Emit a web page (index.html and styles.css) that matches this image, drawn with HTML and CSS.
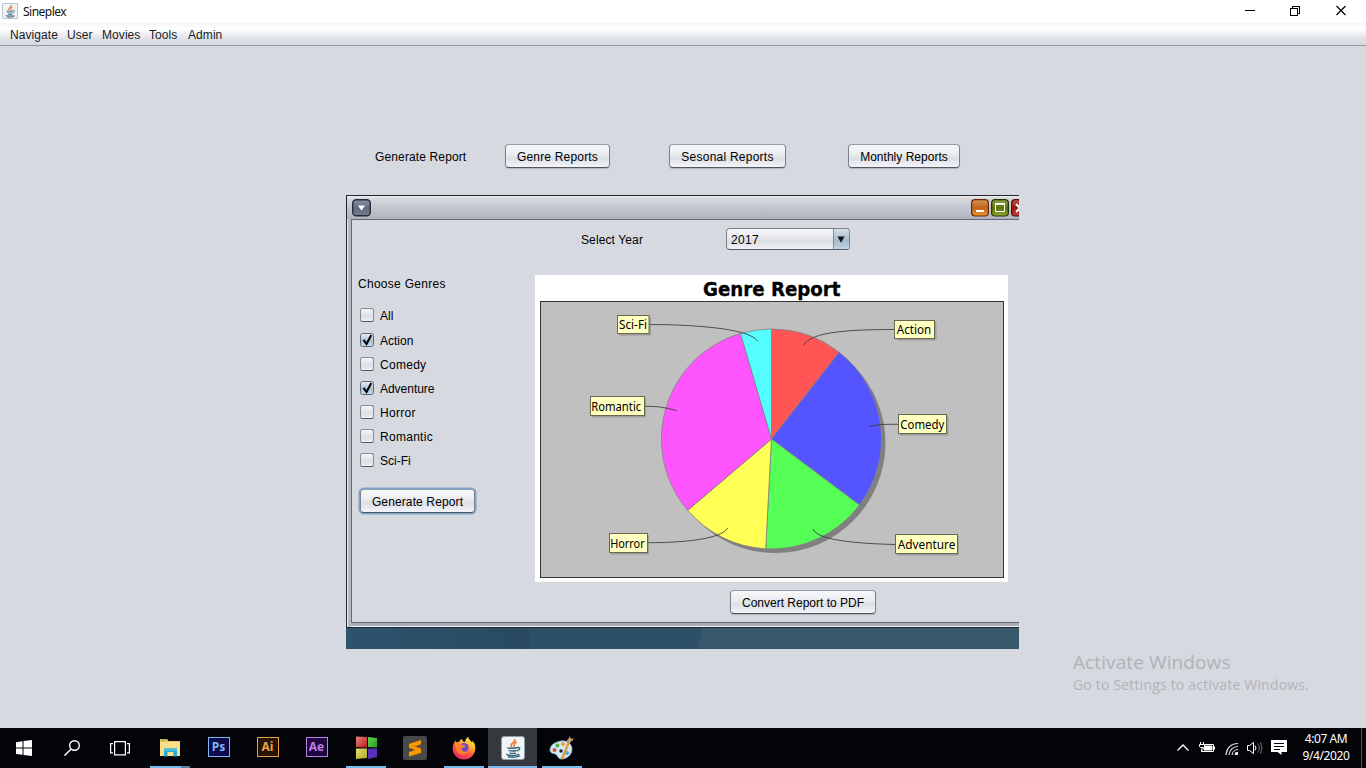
FILE: index.html
```html
<!DOCTYPE html>
<html lang="en">
<head>
<meta charset="utf-8">
<title>Sineplex</title>
<link rel="stylesheet" href="styles.css">
</head>
<body>
<header class="titlebar">
  <svg class="app-icon" width="16" height="16" viewBox="0 0 24 24"><use href="#java"/></svg>
  <span class="app-title">Sineplex</span>
  <svg class="win-controls" width="104" height="16" viewBox="0 0 104 16" fill="none" stroke="#000" shape-rendering="crispEdges">
    <path d="M0 7.500h10M45.500 5.500h7v7h-7zM47.500 5V3.500h7v7H53"/>
    <path d="M91.500 3l9 9M100.500 3l-9 9" shape-rendering="auto" stroke-width="1.200"/>
  </svg>
</header>
<nav class="menubar">
  <span class="m1">Navigate</span><span class="m2">User</span><span class="m3">Movies</span><span class="m4">Tools</span><span class="m5">Admin</span>
</nav>
<main class="workspace">
  <div class="report-row">
    <span class="report-label">Generate Report</span>
    <button class="btn genre">Genre Reports</button>
    <button class="btn seasonal">Sesonal Reports</button>
    <button class="btn monthly">Monthly Reports</button>
  </div>
  <div class="desktop">
    <section class="iframe">
      <div class="iframe-bar">
        <svg width="19" height="18" viewBox="0 0 19 18"><defs><linearGradient id="gm" x2="0" y2="1"><stop stop-color="#8a93a4"/><stop offset=".5" stop-color="#606b7e"/><stop offset="1" stop-color="#727d90"/></linearGradient></defs><rect x=".7" y=".7" width="17.600" height="16" rx="3.500" fill="url(#gm)" stroke="#252c38" stroke-width="1.400"/><path d="M5.800 6.500h7.400l-3.700 5z" fill="#fff"/></svg>
        <svg class="iframe-controls" width="60" height="18" viewBox="0 0 60 18"><defs>
          <linearGradient id="go" x2="0" y2="1"><stop stop-color="#d69555"/><stop offset=".5" stop-color="#bf6318"/><stop offset="1" stop-color="#ed9430"/></linearGradient>
          <linearGradient id="gg" x2="0" y2="1"><stop stop-color="#8d9e48"/><stop offset=".5" stop-color="#5b7108"/><stop offset="1" stop-color="#91a82c"/></linearGradient>
          <linearGradient id="gr" x2="0" y2="1"><stop stop-color="#bb5550"/><stop offset=".5" stop-color="#9b1713"/><stop offset="1" stop-color="#ce3d32"/></linearGradient></defs>
          <rect x=".6" y=".6" width="16.800" height="16.400" rx="3.500" fill="url(#go)" stroke="#682a08" stroke-width="1.200"/><path d="M5 11h8v2H5z" fill="#fff"/>
          <rect x="20.600" y=".6" width="16.800" height="16.400" rx="3.500" fill="url(#gg)" stroke="#263506" stroke-width="1.200"/><path d="M24.500 5v7.500h9V5z" fill="none" stroke="#fff"/><path d="M24 4.800h10" stroke="#fff" stroke-width="1.600"/>
          <rect x="40.600" y=".6" width="16.800" height="16.400" rx="3.500" fill="url(#gr)" stroke="#590d0d" stroke-width="1.200"/><path d="M45 5l8 8M53 5l-8 8" stroke="#fff" stroke-width="2"/>
        </svg>
      </div>
      <div class="iframe-body">
        <div class="year-row">
          <span class="year-label">Select Year</span>
          <div class="combo"><span class="combo-value">2017</span><span class="combo-arrow"><svg width="8" height="7" viewBox="0 0 8 7"><path d="M.5.5h7L4 6.700z" fill="#10151c"/></svg></span></div>
        </div>
        <div class="columns">
          <aside class="filters">
            <h2>Choose Genres</h2>
            <label class="check all"><i class="box"></i>All</label>
            <label class="check"><i class="box on"><svg width="15" height="15" viewBox="0 0 15 15"><path d="M3.500 6.800l3 4.200L11.300 2" fill="none" stroke="#000" stroke-width="2"/></svg></i>Action</label>
            <label class="check wide"><i class="box"></i>Comedy</label>
            <label class="check tight"><i class="box on"><svg width="15" height="15" viewBox="0 0 15 15"><path d="M3.500 6.800l3 4.200L11.300 2" fill="none" stroke="#000" stroke-width="2"/></svg></i>Adventure</label>
            <label class="check wide"><i class="box"></i>Horror</label>
            <label class="check wide"><i class="box"></i>Romantic</label>
            <label class="check"><i class="box"></i>Sci-Fi</label>
            <button class="btn generate">Generate Report</button>
          </aside>
          <div class="report">
            <svg class="chart" width="473" height="307" viewBox="535 275 473 307">
              <rect x="535" y="275" width="473" height="307" fill="#fff"/>
              <text class="chart-title" x="703" y="296" textLength="137.500" lengthAdjust="spacingAndGlyphs">Genre Report</text>
              <rect x="540.500" y="301.500" width="463" height="276" fill="#c0c0c0" stroke="#333"/>
              <circle cx="775.500" cy="443" r="110" fill="#808080"/>
              <g stroke="#808080" stroke-width=".8" stroke-linejoin="round">
                <path fill="#f55" d="M771.500 439V329A110 110 0 0 1 839.200 352.300z"/>
                <path fill="#55f" d="M771.500 439L839.200 352.300A110 110 0 0 1 859.500 505z"/>
                <path fill="#5f5" d="M771.500 439L859.500 505A110 110 0 0 1 765.700 548.800z"/>
                <path fill="#ff5" d="M771.500 439L765.700 548.800A110 110 0 0 1 687.700 510.300z"/>
                <path fill="#f5f" d="M771.500 439L687.700 510.300A110 110 0 0 1 740.500 333.500z"/>
                <path fill="#5ff" d="M771.500 439L740.500 333.500A110 110 0 0 1 771.500 329z"/>
              </g>
              <g fill="none" stroke="#404040" stroke-width=".9">
                <path d="M649 324.500C690 324.500 749 328 757.500 341"/>
                <path d="M645 406.300C658 406.300 663 407 677 410.700"/>
                <path d="M648 542.700C690 542.700 722 538 727.700 528"/>
                <path d="M895 329.500C855 329.500 810 331 803.500 345.500"/>
                <path d="M898 424.300C887 424.300 878 424 869.500 426.500"/>
                <path d="M895 544.500C855 543.500 817 540 813 529"/>
              </g>
              <g fill="#808080" opacity=".55">
                <path d="M619 317h32v18.500h-32zM592 398h54v19.500H592zM611 535h38v19.500h-38zM897 322h39.500v18.500H897zM900 416h48.500v19.500H900zM897 536h62v19.500H897z"/>
              </g>
              <g fill="#ffffc0" stroke="#68684e">
                <rect x="617.500" y="315.500" width="31.500" height="18"/>
                <rect x="590.500" y="396.500" width="54" height="19"/>
                <rect x="609.500" y="533.500" width="38" height="19"/>
                <rect x="894.500" y="320.500" width="40" height="18"/>
                <rect x="898.500" y="414.500" width="48" height="19"/>
                <rect x="895.500" y="534.500" width="62" height="19"/>
              </g>
              <g class="slice-labels">
                <text x="619" y="329" textLength="28" lengthAdjust="spacingAndGlyphs">Sci-Fi</text>
                <text x="591.200" y="411" textLength="50" lengthAdjust="spacingAndGlyphs">Romantic</text>
                <text x="610.200" y="548" textLength="34.500" lengthAdjust="spacingAndGlyphs">Horror</text>
                <text x="896.800" y="334" textLength="34.500" lengthAdjust="spacingAndGlyphs">Action</text>
                <text x="900.300" y="429" textLength="44" lengthAdjust="spacingAndGlyphs">Comedy</text>
                <text x="897.800" y="549" textLength="57.500" lengthAdjust="spacingAndGlyphs">Adventure</text>
              </g>
            </svg>
            <button class="btn convert">Convert Report to PDF</button>
          </div>
        </div>
      </div>
    </section>
    <svg class="wallpaper" width="673" height="21" viewBox="0 0 673 21"><defs><linearGradient id="wp"><stop stop-color="#2d536d"/><stop offset=".28" stop-color="#294a60"/></linearGradient></defs><path fill="url(#wp)" d="M0 0h673v21H0z"/><path fill="#2e5067" d="M184 0h175v21H184z"/><path fill="#36576c" d="M357 0h316v21H351z"/></svg>
  </div>
  <div class="watermark"><span class="wm-title">Activate Windows</span><span class="wm-text">Go to Settings to activate Windows.</span></div>
</main>
<footer class="taskbar">
  <div class="sys"><svg width="16" height="16" viewBox="0 0 16 16" fill="#fff"><path d="M0 2.200l6.500-1v6.300H0zM7.500 1L16 0v7.500H7.500zM0 8.500h6.500v6.300L0 13.900zM7.500 8.500H16V16l-8.500-1z"/></svg></div>
  <div class="sys"><svg width="16" height="16" viewBox="0 0 16 16" fill="none" stroke="#fff" stroke-width="1.400"><circle cx="10.500" cy="5.500" r="4.800"/><path d="M7.200 9L.5 15.600"/></svg></div>
  <div class="sys view"><svg width="20" height="15" viewBox="0 0 20 15" fill="none" stroke="#fff" stroke-width="1.200"><path d="M4.600.6h10.800v13.300H4.600zM3 2.600H.6v9.300H3M17 2.600h2.400v9.300H17"/></svg></div>
  <div class="app run multi"><svg width="22" height="20" viewBox="0 0 22 20"><path d="M1 1h7l1.500 2H21v15H1z" fill="#eac35c"/><path d="M1 4h20v14H1z" fill="#fbdf86"/><path d="M2 1.500h5v1H2z" fill="#61b3a0"/><path d="M5 18.500v-8h13v8h-3.500V14h-6v4.500z" fill="#25a9d5"/><path d="M5 10.500h13V13H5z" fill="#43bee2"/></svg></div>
  <div class="app"><span class="adobe ps">Ps</span></div>
  <div class="app"><span class="adobe ai">Ai</span></div>
  <div class="app"><span class="adobe ae">Ae</span></div>
  <div class="app run"><svg width="24" height="24" viewBox="0 0 24 24"><defs><linearGradient id="cr" y2="1"><stop stop-color="#ed817b"/><stop offset="1" stop-color="#b51e18"/></linearGradient><linearGradient id="cg" y2="1"><stop stop-color="#69d558"/><stop offset="1" stop-color="#249c18"/></linearGradient><linearGradient id="cy" y2="1"><stop stop-color="#dfdd6b"/><stop offset="1" stop-color="#b3a92c"/></linearGradient><linearGradient id="cp" y2="1"><stop stop-color="#5630bd"/><stop offset="1" stop-color="#5b2dbb"/></linearGradient></defs><path fill="url(#cr)" d="M2 .5l11 .5v10.500L2 11z"/><path fill="url(#cg)" d="M14 1l9 1v9.500L14 11z"/><path fill="url(#cy)" d="M2 12.500h11V22L2 23z"/><path fill="url(#cp)" d="M14 12.500h9V21l-9 2z"/></svg></div>
  <div class="app"><svg width="24" height="24" viewBox="0 0 24 24"><rect width="24" height="24" rx="2" fill="#494949"/><path d="M6 8l12-4v4.300l-6.500 2.200 6.500 2.200V17L6 20.500V16l6-2-6-2.200z" fill="#ff9800"/><path d="M6 8l12 4v.7L11.500 10.500z" fill="#da7900"/></svg></div>
  <div class="app run"><svg width="24" height="24" viewBox="0 0 24 24"><defs><linearGradient id="ff" x1=".8" x2=".3" y2="1"><stop stop-color="#fff04a"/><stop offset=".35" stop-color="#ffb62c"/><stop offset=".65" stop-color="#fc5444"/><stop offset="1" stop-color="#ed2469"/></linearGradient></defs><path fill="url(#ff)" d="M3.500 4.500C4 7 5 6 7 6c1-2 2-3 3-3 0 2 1.500 3 3 3 0-2 2-4 3-5.500.5 3 3 4 4 6 .5-.5.500-1 .3-2C23 7 23.500 10 23.300 12.500 23 19 18 23.500 12 23.500S1 19 .7 13C.5 9 2 7 3.500 4.500z"/><circle cx="12" cy="11.500" r="4.600" fill="#7148c9"/><path fill="#ff812e" d="M3 8c3-2 6-1 7 1 2 .1 3.500 0 3.500 1-1 2-3 1-4 3 1 3 4 4 7 2-2 5-10 5-12-1z"/></svg></div>
  <div class="app run active"><svg width="24" height="24" viewBox="0 0 24 24"><g id="java"><rect x=".5" y=".5" width="23" height="23" rx="2.500" fill="#f1f4f5" stroke="#8a9eab"/><g fill="none" stroke="#ed7934" stroke-width="1.700"><path d="M13.300 3c3 3-5.500 4.300-2.500 7.800M15.600 6c-4 2-1.500 3-2.800 5"/></g><g fill="none" stroke="#376482" stroke-width="1.400"><path d="M7 11.500c-1.500 1 8 1 10-.1 3 0 1.500 3-1 3.500M8 14c0 1.500 6 1 7.500.5M9 16.500c0 1.300 4.500 1 6 .3M6 18c-2 1.500 10 2.300 12 0M7 20.800c4 .8 10 .5 12-1.300"/></g></g></svg></div>
  <div class="app run"><svg width="26" height="24" viewBox="0 0 26 24"><path d="M12 5c6-1 11 3 11 8 0 6-5 10-11 10-3 0-3-3-5-4.500C5 17 1 18 1 14 1 9 6 6 12 5z" fill="#d2eaf4" stroke="#7fa7b9" stroke-width=".8"/><circle cx="5.500" cy="14" r="2" fill="#d45342"/><circle cx="12" cy="15" r="1.700" fill="#172736"/><circle cx="8.500" cy="9.500" r="2" fill="#50b641"/><circle cx="14" cy="8" r="2" fill="#ef9b2c"/><circle cx="18" cy="17" r="2" fill="#52a5dc"/><path d="M13 23l7-17" stroke="#e69839" stroke-width="2.400"/><path d="M18.500 6c-2-3 2-2 2-6l2 3 2-1c0 3-3 3-4 6z" fill="#c39a70"/></svg></div>
  <div class="tray">
    <svg class="tray-icons" width="112" height="20" viewBox="0 0 112 20" fill="none" stroke="#fff">
      <path d="M2.500 12.500L8 7l5.500 5.500" stroke-width="1.300"/>
      <path d="M30 6.500h8.500v7h-12v-2M39.500 8.500v3"/><path d="M30 8h7v4h-8v-2z" fill="#fff"/><path d="M25.500 4v2M28.500 4v2M24.500 6.500h5v2l-1 1h-3l-1-1zM27 9.500v3.500"/>
      <g stroke="#ddd" stroke-width="1.200"><path d="M51 17C51.500 10 56 5.500 63 5.500M54 17c.5-5 4-8.500 9-8.500M57 17c.5-3 3-5.500 6-5.500M60 17c.2-1.500 1.500-2.500 3-2.500"/></g><circle cx="61.700" cy="15.500" r="1.500" fill="#fff" stroke="none"/>
      <path d="M72.500 7.500h2l4-3v11l-4-3h-2z"/><path d="M80 7.500q2 2.500 0 5"/><path d="M82.500 5.500q4 4.500 0 9M85 4.500q4 5.500 0 11" stroke="#777"/>
      <path d="M96 2h16v12h-5.500v3l-4-3H96z" fill="#fff" stroke="none"/><path d="M99 5.500h10M99 8.500h10M99 11.500h6" stroke="#000"/>
    </svg>
    <div class="clock"><span class="time">4:07 AM</span><span class="date">9/4/2020</span></div>
  </div>
</footer>
</body>
</html>
```
FILE: styles.css
```css
* { box-sizing: border-box; }
body {
  margin: 0; width: 1366px; height: 768px; overflow: hidden;
  display: flex; flex-direction: column;
  background: #d6d9e0; color: #000;
  font: 12px/16px "Liberation Sans", Arial, sans-serif;
}
svg { display: block; flex: none; }
span, label, button, h2 { white-space: nowrap; }

.titlebar { flex: none; height: 23px; background: #fff; display: flex; align-items: flex-start; padding: 3px 17px 0 2px; }
.app-title { margin: 1px 0 0 5px; font: 12px/16px "Noto Sans", sans-serif; letter-spacing: -.5px; color: #111; }
.win-controls { margin-left: auto; }
.menubar {
  flex: none; height: 23px; display: flex; padding: 4px 0 0 10px;
  background: linear-gradient(#f5f5f5 0, #fff 25%, #f3f4f6 45%, #dcdfe6 75%, #d6d9e0 100%);
  border-bottom: 1px solid #9297a1; color: #1b1b1f; letter-spacing: .07px;
}
.m1 { width: 57px; }
.m2 { width: 35px; }
.m3 { width: 47px; }
.m4 { width: 39px; }

.workspace { flex: none; height: 682px; position: relative; padding: 98px 0 0 346px; }
.report-row { height: 51px; display: flex; align-items: flex-start; padding-left: 29px; }
.report-label { width: 130px; padding-top: 5px; letter-spacing: .13px; }
.btn {
  font: inherit; color: #000; height: 24px; padding: 1px 0 0; letter-spacing: .12px;
  border: 1px solid #7c818b; border-color: #989ca4 #7c818b #51565f; border-radius: 4px;
  background: linear-gradient(#f8f9fa, #e9ebef 45%, #dcdfe5 60%, #f3f5fb);
  box-shadow: 0 1px 1px rgba(90, 95, 105, .3);
}
.genre { width: 105px; letter-spacing: .18px; }
.seasonal { width: 117px; margin-left: 59px; letter-spacing: .24px; }
.monthly { width: 112px; margin-left: 62px; letter-spacing: .02px; }

.desktop { width: 673px; height: 454px; overflow: hidden; }
.iframe {
  width: 673px; height: 433px; border: 1px solid #242730; border-right: 0;
  padding-left: 4px; background: linear-gradient(90deg, #eceef2 0 1px, #b4b8c4 1px 4px, #b0b3be 4px);
  display: flex; flex-direction: column;
}
.iframe-bar {
  flex: none; height: 23px; margin-left: -4px; padding: 3px 0 0 5px;
  display: flex; overflow: hidden;
  background: linear-gradient(#eef0f2 0, #d7d9df 10%, #c4c7cf 50%, #aeb2bc 100%);
}
.iframe-controls { margin-left: 600px; }
.iframe-body {
  flex: none; height: 404px; background: #d6d9e0;
  border: solid #626a79; border-width: 1px 0 1px 1px; box-shadow: 0 3px #a9adb7, 0 4px #f2f3f5;
}
.year-row { height: 55px; padding: 8px 0 0 229px; display: flex; align-items: flex-start; }
.year-label { width: 145px; padding-top: 4px; letter-spacing: .12px; }
.combo {
  width: 124px; height: 22px; display: flex; border: 1px solid #7c818b; border-bottom-color: #555b66;
  border-radius: 4px; overflow: hidden; background: linear-gradient(#f6f7f9, #e6e8ec 45%, #dadde2 60%, #f0f2f7);
}
.combo-value { flex: 1; padding: 3px 0 0 4px; letter-spacing: .3px; }
.combo-arrow { width: 16px; padding: 7px 0 0 3px; border-left: 1px solid #798e9f; background: linear-gradient(#d5e0e9, #a5bacb 55%, #bed5e7); }
.columns { display: flex; }
.filters { width: 183px; padding-left: 6px; display: flex; flex-direction: column; align-items: flex-start; }
.filters h2 { margin: 1px 0 15px; font: inherit; letter-spacing: .28px; }
.check { height: 24px; padding: 1px 0 0 2px; display: flex; gap: 5px; align-items: flex-start; letter-spacing: 0; }
.check.all { height: 25px; }
.check.wide { letter-spacing: .28px; }
.check.tight { letter-spacing: -.03px; }
.box { width: 14px; height: 14px; margin-right: 1px; flex: none; border: 1px solid #888c94; border-bottom-color: #565b64; border-radius: 2.5px; background: linear-gradient(#f8f8f9, #dcdee3 60%, #eff1f5); }
.box.on { border-color: #536b80; background: linear-gradient(#e5edf4, #a9bfd0 60%, #c8deef); }
.box svg { margin: -1px; }
.generate { width: 115px; margin: 13px 0 0 2px; box-shadow: 0 0 0 1.5px #79a3cb; }
.chart-title { font: bold 20px "DejaVu Sans", Tahoma, sans-serif; stroke: #000; stroke-width: .35px; }
.slice-labels { font: 12px "Noto Sans", Tahoma, sans-serif; }
.convert { display: block; width: 146px; margin: 8px 0 0 195px; letter-spacing: 0; }
.watermark {
  position: absolute; left: 1073px; top: 604px; display: flex; flex-direction: column;
  font-family: "Open Sans", "Noto Sans", sans-serif; color: #b0b3b8;
}
.wm-title { font-size: 19px; line-height: 25px; letter-spacing: .1px; }
.wm-text { font-size: 14px; line-height: 20px; letter-spacing: .19px; }

.taskbar { flex: none; height: 40px; background: #020407; display: flex; }
.sys { width: 48px; display: flex; align-items: center; justify-content: center; }
.view { margin-right: 1px; }
.app { width: 49px; display: flex; align-items: center; justify-content: center; background: no-repeat 50% 100% / 40px 2px; }
.run { background-image: linear-gradient(#76b9ed, #76b9ed); }
.multi { background-image: linear-gradient(90deg, #76b9ed 31px, #527fa3 31px); }
.active { background-color: #35383d; background-size: 49px 2px; }
.adobe { width: 22px; height: 20px; border: 1.5px solid; font: bold 12px/18px "Noto Sans", sans-serif; text-align: center; margin-bottom: 2px; }
.ps { color: #80b9ee; background: #0d0b4c; }
.ai { color: #e7a14b; background: #271300; }
.ae { color: #bb83e4; background: #20073d; }
.tray { margin: 0 4px 0 auto; width: 187px; display: flex; border-right: 1px solid #555; }
.tray-icons { margin-top: 10px; }
.clock { flex: 1; padding: 2px 0 0 4px; display: flex; flex-direction: column; align-items: center; color: #fff; font: 12px/17px "Noto Sans", sans-serif; letter-spacing: -.42px; }
```
